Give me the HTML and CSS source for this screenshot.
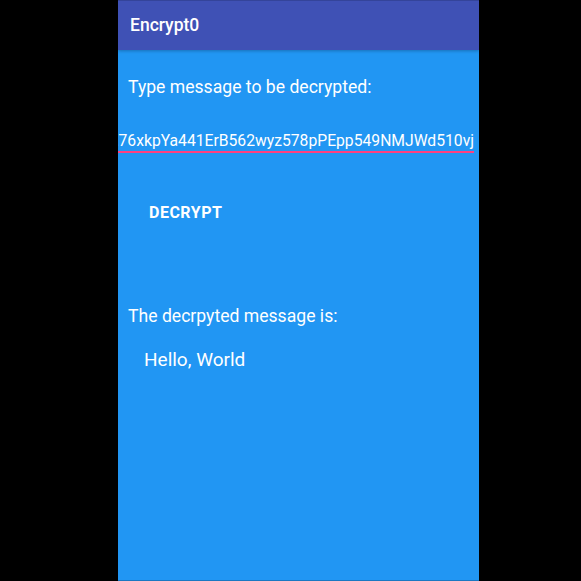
FILE: index.html
```html
<!DOCTYPE html>
<html>
<head>
<meta charset="utf-8">
<link rel="stylesheet" href="styles.css">
</head>
<body>
<div class="frame">
  <div class="screen">
    <header class="toolbar"><span class="title">Encrypt0</span></header>
    <main class="content">
      <div class="label first">Type message to be decrypted:</div>
      <div class="input"><span class="value">a76xkpYa441ErB562wyz578pPEpp549NMJWd510vj</span></div>
      <div class="button">DECRYPT</div>
      <div class="label second">The decrpyted message is:</div>
      <div class="result">Hello, World</div>
    </main>
  </div>
</div>
</body>
</html>
```
FILE: styles.css
```css
html, body {
  margin: 0;
  padding: 0;
  background: #000;
}
.frame {
  width: 581px;
  height: 581px;
  padding-left: 118px;
  box-sizing: border-box;
  display: flex;
}
.screen {
  width: 361px;
  height: 581px;
  background: #2196F3;
  display: flex;
  flex-direction: column;
  font-family: Roboto, "Liberation Sans", sans-serif;
  color: #fff;
  border-bottom: 1px solid #1a78c2;
  box-sizing: border-box;
}
.toolbar {
  height: 50px;
  flex: none;
  background: #3F51B5;
  border-top: 1px solid #34449a;
  box-sizing: border-box;
  display: flex;
  align-items: center;
  padding-left: 12px;
  box-shadow: 0 1px 3px rgba(0,0,0,0.25);
  position: relative;
  z-index: 1;
}
.title {
  font-size: 17.5px;
  font-weight: 500;
  line-height: 20px;
  margin-top: -1px;
}
.content {
  display: flex;
  flex-direction: column;
  align-items: flex-start;
}
.label {
  font-size: 17.6px;
  line-height: 20px;
  padding-left: 10px;
}
.label.first {
  margin-top: 27px;
}
.label.second {
  margin-top: 83px;
}
.input {
  margin-top: 34px;
  align-self: stretch;
  margin-right: 5px;
  display: flex;
  justify-content: flex-end;
  overflow: hidden;
  white-space: nowrap;
  font-size: 15.7px;
  line-height: 20px;
  border-bottom: 2px solid #FF4081;
}
.value {
  flex: none;
}
.button {
  margin-top: 50px;
  margin-left: 31px;
  font-size: 16px;
  font-weight: 700;
  letter-spacing: 0.5px;
  line-height: 20px;
}
.result {
  margin-top: 22px;
  padding-left: 26px;
  font-size: 19px;
  line-height: 24px;
}
```
